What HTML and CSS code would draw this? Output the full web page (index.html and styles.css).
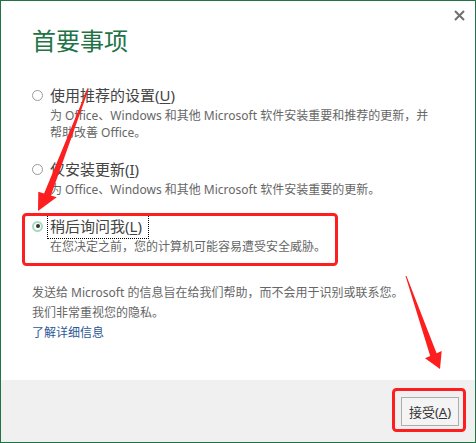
FILE: index.html
```html
<!DOCTYPE html>
<html lang="zh-CN">
<head>
<meta charset="utf-8">
<title>首要事项</title>
<link rel="stylesheet" href="styles.css">
</head>
<body>
<div class="window">
  <header class="header">
    <h1 class="title">首要事项</h1>
    <button class="close" aria-label="关闭">
      <svg width="11" height="11" viewBox="0 0 11 11"><path d="M1 1 L10 10 M10 1 L1 10" stroke="#6f6f6f" stroke-width="2" fill="none"/></svg>
    </button>
  </header>
  <main class="content">
    <div class="options">
      <div class="option">
        <div class="option-row"><span class="radio"></span><span class="label">使用推荐的设置(<u>U</u>)</span></div>
        <p class="desc">为 Office、Windows 和其他 Microsoft 软件安装重要和推荐的更新，并<br>帮助改善 Office。</p>
      </div>
      <div class="option">
        <div class="option-row"><span class="radio"></span><span class="label">仅安装更新(<u>I</u>)</span></div>
        <p class="desc">为 Office、Windows 和其他 Microsoft 软件安装重要的更新。</p>
      </div>
      <div class="option">
        <div class="option-row"><span class="radio checked"></span><span class="label focus">稍后询问我(<u>L</u>)</span></div>
        <p class="desc">在您决定之前，您的计算机可能容易遭受安全威胁。</p>
      </div>
    </div>
    <div class="info">
      <p>发送给 Microsoft 的信息旨在给我们帮助，而不会用于识别或联系您。</p>
      <p>我们非常重视您的隐私。</p>
      <a class="link" href="#">了解详细信息</a>
    </div>
  </main>
  <footer class="footer">
    <button class="accept">接受(<u>A</u>)</button>
  </footer>
  <svg class="annotations" width="476" height="443" viewBox="0 0 476 443">
    <rect x="23.5" y="214.5" width="313" height="50" rx="3" fill="none" stroke="#fd1f1f" stroke-width="3"/>
    <rect x="393.5" y="389.5" width="71" height="41" rx="3" fill="none" stroke="#fd1f1f" stroke-width="3"/>
    <polygon points="87.4,88.8 88.6,89.2 50.9,195.5 56.7,197.3 38,211 38.3,191.7 44.1,193.5" fill="#fd1f1f"/>
    <polygon points="405.5,276 406.5,276 436.6,353.3 441.7,351 440,369 425,358.3 430.2,356.1" fill="#fd1f1f"/>
  </svg>
</div>
</body>
</html>
```

FILE: styles.css
```css
* { box-sizing: border-box; }
html, body { margin: 0; padding: 0; background: #fff; }
body {
  font-family: "Noto Sans", "Noto Sans CJK SC", sans-serif;
  color: #444;
}
.window {
  position: relative;
  width: 476px;
  height: 443px;
  border: 1px solid #217346;
  display: flex;
  flex-direction: column;
  background: #fff;
}
.header {
  display: flex;
  justify-content: space-between;
  align-items: flex-start;
  padding: 9px 10px 0 31px;
}
.title {
  margin: 15px 0 0;
  height: 32px;
  font-size: 24px;
  line-height: 32px;
  font-weight: normal;
  color: #217346;
}
.close {
  display: block;
  border: 0;
  padding: 0;
  background: none;
  width: 11px;
  height: 11px;
}
.close svg { display: block; }
.content {
  flex: 1;
  padding-left: 31px;
}
.options {
  margin-top: 28px;
  display: flex;
  flex-direction: column;
  gap: 18px;
}
.option-row {
  display: flex;
  align-items: center;
  gap: 7px;
  height: 20px;
}
.radio {
  position: relative;
  width: 11px;
  height: 11px;
  border: 1px solid #9a9a9a;
  border-radius: 50%;
  background: #fff;
  flex: none;
}
.radio.checked {
  border: 2px solid #a9d9c0;
}
.radio.checked::after {
  content: "";
  position: absolute;
  left: 1.5px;
  top: 1.5px;
  width: 4px;
  height: 4px;
  border-radius: 50%;
  background: #333;
}
.label {
  font-size: 15px;
  line-height: 20px;
  color: #444;
}
.label u { text-decoration-thickness: 1px; text-underline-offset: 2px; }
.label.focus {
  outline: 1px dotted #000;
  outline-offset: 2px;
  padding-right: 4px;
}
.desc {
  margin: 2px 0 0 18px;
  font-size: 12px;
  line-height: 17px;
  color: #666;
}
.info {
  margin-top: 28px;
  font-size: 12px;
  line-height: 20px;
  color: #666;
}
.info p { margin: 0; height: 20px; }
.link {
  color: #2b5797;
  text-decoration: none;
}
.footer {
  height: 62px;
  background: #f0f0f0;
  display: flex;
  justify-content: flex-end;
  align-items: center;
  padding-right: 16px;
}
.accept {
  width: 58px;
  height: 29px;
  border: 1px solid #adadad;
  background: #f4f4f4;
  font-family: inherit;
  font-size: 13px;
  color: #333;
  padding: 0;
}
.annotations {
  position: absolute;
  left: -1px;
  top: -1px;
  pointer-events: none;
}
```
